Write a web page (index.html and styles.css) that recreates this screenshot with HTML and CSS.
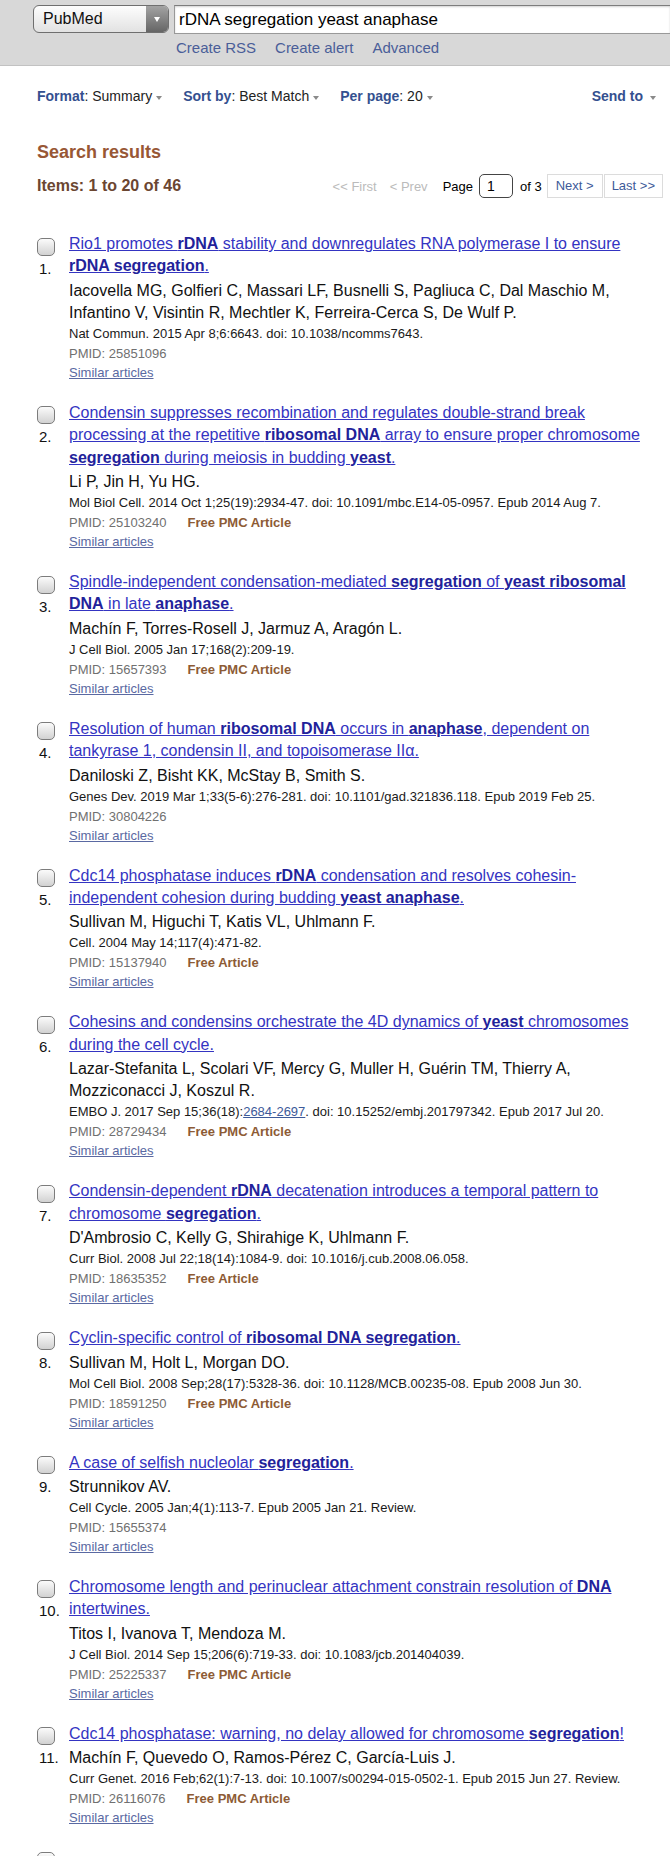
FILE: index.html
```html
<!DOCTYPE html>
<html lang="en">
<head>
<meta charset="utf-8">
<title>rDNA segregation yeast anaphase - PubMed</title>
<link rel="stylesheet" href="styles.css">
</head>
<body>
<div class="header">
  <div class="search-row">
    <div class="select"><span class="select-label">PubMed</span><span class="select-arrow"></span></div>
    <div class="query">rDNA segregation yeast anaphase</div>
  </div>
  <div class="header-links">
    <a href="#">Create RSS</a>
    <a href="#">Create alert</a>
    <a href="#">Advanced</a>
  </div>
</div>

<div class="format-bar">
  <span class="fmt"><b>Format</b>: Summary<i class="caret"></i></span>
  <span class="fmt"><b>Sort by</b>: Best Match<i class="caret"></i></span>
  <span class="fmt"><b>Per page</b>: 20<i class="caret"></i></span>
  <span class="send"><b>Send to</b><i class="caret"></i></span>
</div>

<div class="results-head">
  <h2>Search results</h2>
  <div class="items-row">
    <span class="count">Items: 1 to 20 of 46</span>
    <div class="pager">
      <span class="pg-dis pg-first">&lt;&lt; First</span>
      <span class="pg-dis pg-prev">&lt; Prev</span>
      <span class="pg-page">Page</span>
      <span class="pg-input">1</span>
      <span class="pg-of">of 3</span>
      <a class="pg-btn pg-next" href="#">Next &gt;</a>
      <a class="pg-btn pg-last" href="#">Last &gt;&gt;</a>
    </div>
  </div>
</div>

<div class="results">
  <div class="item">
    <div class="item-left"><span class="cb"></span><span class="num">1.</span></div>
    <div class="item-body">
      <div class="title"><a href="#">Rio1 promotes <b>rDNA</b> stability and downregulates RNA polymerase I to ensure <b>rDNA segregation</b>.</a></div>
      <div class="authors">Iacovella MG, Golfieri C, Massari LF, Busnelli S, Pagliuca C, Dal Maschio M, Infantino V, Visintin R, Mechtler K, Ferreira-Cerca S, De Wulf P.</div>
      <div class="cit">Nat Commun. 2015 Apr 8;6:6643. doi: 10.1038/ncomms7643.</div>
      <div class="pmid-row"><span class="pmid">PMID: 25851096</span></div>
      <div class="similar"><a href="#">Similar articles</a></div>
    </div>
  </div>

  <div class="item">
    <div class="item-left"><span class="cb"></span><span class="num">2.</span></div>
    <div class="item-body">
      <div class="title"><a href="#">Condensin suppresses recombination and regulates double-strand break processing at the repetitive <b>ribosomal DNA</b> array to ensure proper chromosome <b>segregation</b> during meiosis in budding <b>yeast</b>.</a></div>
      <div class="authors">Li P, Jin H, Yu HG.</div>
      <div class="cit">Mol Biol Cell. 2014 Oct 1;25(19):2934-47. doi: 10.1091/mbc.E14-05-0957. Epub 2014 Aug 7.</div>
      <div class="pmid-row"><span class="pmid">PMID: 25103240</span><span class="free">Free PMC Article</span></div>
      <div class="similar"><a href="#">Similar articles</a></div>
    </div>
  </div>

  <div class="item">
    <div class="item-left"><span class="cb"></span><span class="num">3.</span></div>
    <div class="item-body">
      <div class="title"><a href="#">Spindle-independent condensation-mediated <b>segregation</b> of <b>yeast ribosomal DNA</b> in late <b>anaphase</b>.</a></div>
      <div class="authors">Machín F, Torres-Rosell J, Jarmuz A, Aragón L.</div>
      <div class="cit">J Cell Biol. 2005 Jan 17;168(2):209-19.</div>
      <div class="pmid-row"><span class="pmid">PMID: 15657393</span><span class="free">Free PMC Article</span></div>
      <div class="similar"><a href="#">Similar articles</a></div>
    </div>
  </div>

  <div class="item">
    <div class="item-left"><span class="cb"></span><span class="num">4.</span></div>
    <div class="item-body">
      <div class="title"><a href="#">Resolution of human <b>ribosomal DNA</b> occurs in <b>anaphase</b>, dependent on tankyrase 1, condensin II, and topoisomerase IIα.</a></div>
      <div class="authors">Daniloski Z, Bisht KK, McStay B, Smith S.</div>
      <div class="cit">Genes Dev. 2019 Mar 1;33(5-6):276-281. doi: 10.1101/gad.321836.118. Epub 2019 Feb 25.</div>
      <div class="pmid-row"><span class="pmid">PMID: 30804226</span></div>
      <div class="similar"><a href="#">Similar articles</a></div>
    </div>
  </div>

  <div class="item">
    <div class="item-left"><span class="cb"></span><span class="num">5.</span></div>
    <div class="item-body">
      <div class="title"><a href="#">Cdc14 phosphatase induces <b>rDNA</b> condensation and resolves cohesin-independent cohesion during budding <b>yeast anaphase</b>.</a></div>
      <div class="authors">Sullivan M, Higuchi T, Katis VL, Uhlmann F.</div>
      <div class="cit">Cell. 2004 May 14;117(4):471-82.</div>
      <div class="pmid-row"><span class="pmid">PMID: 15137940</span><span class="free">Free Article</span></div>
      <div class="similar"><a href="#">Similar articles</a></div>
    </div>
  </div>

  <div class="item">
    <div class="item-left"><span class="cb"></span><span class="num">6.</span></div>
    <div class="item-body">
      <div class="title"><a href="#">Cohesins and condensins orchestrate the 4D dynamics of <b>yeast</b> chromosomes during the cell cycle.</a></div>
      <div class="authors">Lazar-Stefanita L, Scolari VF, Mercy G, Muller H, Guérin TM, Thierry A, Mozziconacci J, Koszul R.</div>
      <div class="cit">EMBO J. 2017 Sep 15;36(18):<a href="#">2684-2697</a>. doi: 10.15252/embj.201797342. Epub 2017 Jul 20.</div>
      <div class="pmid-row"><span class="pmid">PMID: 28729434</span><span class="free">Free PMC Article</span></div>
      <div class="similar"><a href="#">Similar articles</a></div>
    </div>
  </div>

  <div class="item">
    <div class="item-left"><span class="cb"></span><span class="num">7.</span></div>
    <div class="item-body">
      <div class="title"><a href="#">Condensin-dependent <b>rDNA</b> decatenation introduces a temporal pattern to chromosome <b>segregation</b>.</a></div>
      <div class="authors">D'Ambrosio C, Kelly G, Shirahige K, Uhlmann F.</div>
      <div class="cit">Curr Biol. 2008 Jul 22;18(14):1084-9. doi: 10.1016/j.cub.2008.06.058.</div>
      <div class="pmid-row"><span class="pmid">PMID: 18635352</span><span class="free">Free Article</span></div>
      <div class="similar"><a href="#">Similar articles</a></div>
    </div>
  </div>

  <div class="item">
    <div class="item-left"><span class="cb"></span><span class="num">8.</span></div>
    <div class="item-body">
      <div class="title"><a href="#">Cyclin-specific control of <b>ribosomal DNA segregation</b>.</a></div>
      <div class="authors">Sullivan M, Holt L, Morgan DO.</div>
      <div class="cit">Mol Cell Biol. 2008 Sep;28(17):5328-36. doi: 10.1128/MCB.00235-08. Epub 2008 Jun 30.</div>
      <div class="pmid-row"><span class="pmid">PMID: 18591250</span><span class="free">Free PMC Article</span></div>
      <div class="similar"><a href="#">Similar articles</a></div>
    </div>
  </div>

  <div class="item">
    <div class="item-left"><span class="cb"></span><span class="num">9.</span></div>
    <div class="item-body">
      <div class="title"><a href="#">A case of selfish nucleolar <b>segregation</b>.</a></div>
      <div class="authors">Strunnikov AV.</div>
      <div class="cit">Cell Cycle. 2005 Jan;4(1):113-7. Epub 2005 Jan 21. Review.</div>
      <div class="pmid-row"><span class="pmid">PMID: 15655374</span></div>
      <div class="similar"><a href="#">Similar articles</a></div>
    </div>
  </div>

  <div class="item">
    <div class="item-left"><span class="cb"></span><span class="num">10.</span></div>
    <div class="item-body">
      <div class="title"><a href="#">Chromosome length and perinuclear attachment constrain resolution of <b>DNA</b> intertwines.</a></div>
      <div class="authors">Titos I, Ivanova T, Mendoza M.</div>
      <div class="cit">J Cell Biol. 2014 Sep 15;206(6):719-33. doi: 10.1083/jcb.201404039.</div>
      <div class="pmid-row"><span class="pmid">PMID: 25225337</span><span class="free">Free PMC Article</span></div>
      <div class="similar"><a href="#">Similar articles</a></div>
    </div>
  </div>

  <div class="item">
    <div class="item-left"><span class="cb"></span><span class="num">11.</span></div>
    <div class="item-body">
      <div class="title"><a href="#">Cdc14 phosphatase: warning, no delay allowed for chromosome <b>segregation</b>!</a></div>
      <div class="authors">Machín F, Quevedo O, Ramos-Pérez C, García-Luis J.</div>
      <div class="cit">Curr Genet. 2016 Feb;62(1):7-13. doi: 10.1007/s00294-015-0502-1. Epub 2015 Jun 27. Review.</div>
      <div class="pmid-row"><span class="pmid">PMID: 26116076</span><span class="free">Free PMC Article</span></div>
      <div class="similar"><a href="#">Similar articles</a></div>
    </div>
  </div>

  <div class="item">
    <div class="item-left"><span class="cb"></span></div>
    <div class="item-body"></div>
  </div>
</div>
</body>
</html>
```
FILE: styles.css
```css
html, body {
  margin: 0;
  padding: 0;
  background: #fff;
}
body {
  width: 670px;
  overflow: hidden;
  font-family: "Liberation Sans", Arial, Helvetica, sans-serif;
  color: #000;
}
a { text-decoration: none; }

/* Header */
.header {
  height: 66px;
  box-sizing: border-box;
  background: #d8d8d8;
  border-bottom: 1px solid #c2c2c2;
  padding: 5px 0 0 33px;
  overflow: hidden;
}
.search-row {
  display: flex;
  height: 29px;
}
.select {
  flex: none;
  width: 136px;
  height: 28px;
  box-sizing: border-box;
  border: 1px solid #6f6f6f;
  border-radius: 6px;
  display: flex;
  overflow: hidden;
  background: linear-gradient(#fdfdfd, #e2e2e2);
}
.select-label {
  flex: 1;
  font-size: 16px;
  line-height: 26px;
  padding-left: 9px;
  color: #111;
}
.select-arrow {
  width: 22px;
  background: linear-gradient(#a3a3a3, #656565);
  display: flex;
  align-items: center;
  justify-content: center;
}
.select-arrow::after {
  content: "";
  border-left: 3.5px solid transparent;
  border-right: 3.5px solid transparent;
  border-top: 5px solid #fff;
}
.query {
  flex: 1;
  margin-left: 5px;
  height: 29px;
  box-sizing: border-box;
  border: 1px solid #999;
  border-top-color: #7d7d7d;
  border-right: none;
  background: #fff;
  box-shadow: inset 0 1px 2px rgba(0,0,0,0.18);
  font-size: 17px;
  line-height: 27px;
  padding-left: 4px;
  color: #000;
}
.header-links {
  display: flex;
  gap: 19px;
  margin: 5px 0 0 143px;
  font-size: 15px;
  line-height: 18px;
}
.header-links a { color: #4a5e98; }

/* Format bar */
.format-bar {
  display: flex;
  align-items: center;
  margin-top: 20px;
  padding: 0 14px 0 37px;
  font-size: 14px;
  line-height: 20px;
  color: #222;
}
.fmt { margin-right: 21px; }
.fmt b, .send b { color: #34508f; }
.caret {
  display: inline-block;
  vertical-align: middle;
  margin-left: 4px;
  margin-top: 1px;
  border-left: 3.5px solid transparent;
  border-right: 3.5px solid transparent;
  border-top: 4px solid #8a8a8a;
}
.send { margin-left: auto; }
.send .caret { margin-left: 7px; }

/* Results header */
.results-head {
  padding: 0 7px 0 37px;
}
.results-head h2 {
  margin: 34px 0 0;
  font-size: 18px;
  line-height: 24px;
  font-weight: bold;
  color: #985735;
}
.items-row {
  display: flex;
  align-items: center;
  height: 24px;
  margin-top: 10px;
}
.count {
  font-size: 16px;
  font-weight: bold;
  color: #6b4631;
}
.pager {
  margin-left: auto;
  display: flex;
  align-items: center;
  font-size: 13px;
  color: #000;
}
.pg-dis { color: #bbbbbb; }
.pg-first { margin-right: 13px; }
.pg-prev { margin-right: 15px; }
.pg-page { margin-right: 6px; }
.pg-input {
  width: 34px;
  height: 24px;
  box-sizing: border-box;
  border: 1px solid #444;
  border-radius: 5px;
  font-size: 14px;
  line-height: 22px;
  padding-left: 7px;
  margin-right: 7px;
}
.pg-of { margin-right: 5px; }
.pg-btn {
  height: 24px;
  box-sizing: border-box;
  border: 1px solid #dcdcdc;
  line-height: 22px;
  padding: 0 8px;
  color: #3d5a99;
}
.pg-last { margin-left: 1px; padding: 0 7px; }

/* Results list */
.results {
  padding: 35px 14px 0 37px;
}
.item {
  display: flex;
  margin-bottom: 20px;
}
.item-left {
  flex: none;
  width: 32px;
  padding-top: 4.5px;
}
.cb {
  display: block;
  width: 18px;
  height: 18px;
  box-sizing: border-box;
  border: 1px solid #7c7c7c;
  border-radius: 5px;
  background: linear-gradient(#fbfbfb, #d2d2d2);
}
.num {
  display: block;
  margin-top: 2px;
  padding-left: 2px;
  font-size: 15px;
  line-height: 22px;
  color: #111;
  white-space: nowrap;
}
.item-body {
  flex: none;
  width: 587px;
}
.title {
  font-size: 16px;
  line-height: 22.4px;
}
.title a {
  color: #3434c2;
  text-decoration: underline;
}
.title b { color: #22229a; }
.authors {
  margin-top: 2px;
  font-size: 16px;
  line-height: 22px;
  color: #111;
}
.cit {
  font-size: 13px;
  line-height: 20px;
  color: #1a1a1a;
}
.cit a {
  color: #3d5a99;
  text-decoration: underline;
}
.pmid-row {
  display: flex;
  gap: 21px;
  font-size: 13px;
  line-height: 20px;
}
.pmid { color: #707070; }
.free {
  font-weight: bold;
  color: #8d5b35;
}
.similar {
  font-size: 13px;
  line-height: 18px;
}
.similar a {
  color: #5a69a2;
  text-decoration: underline;
}
```
